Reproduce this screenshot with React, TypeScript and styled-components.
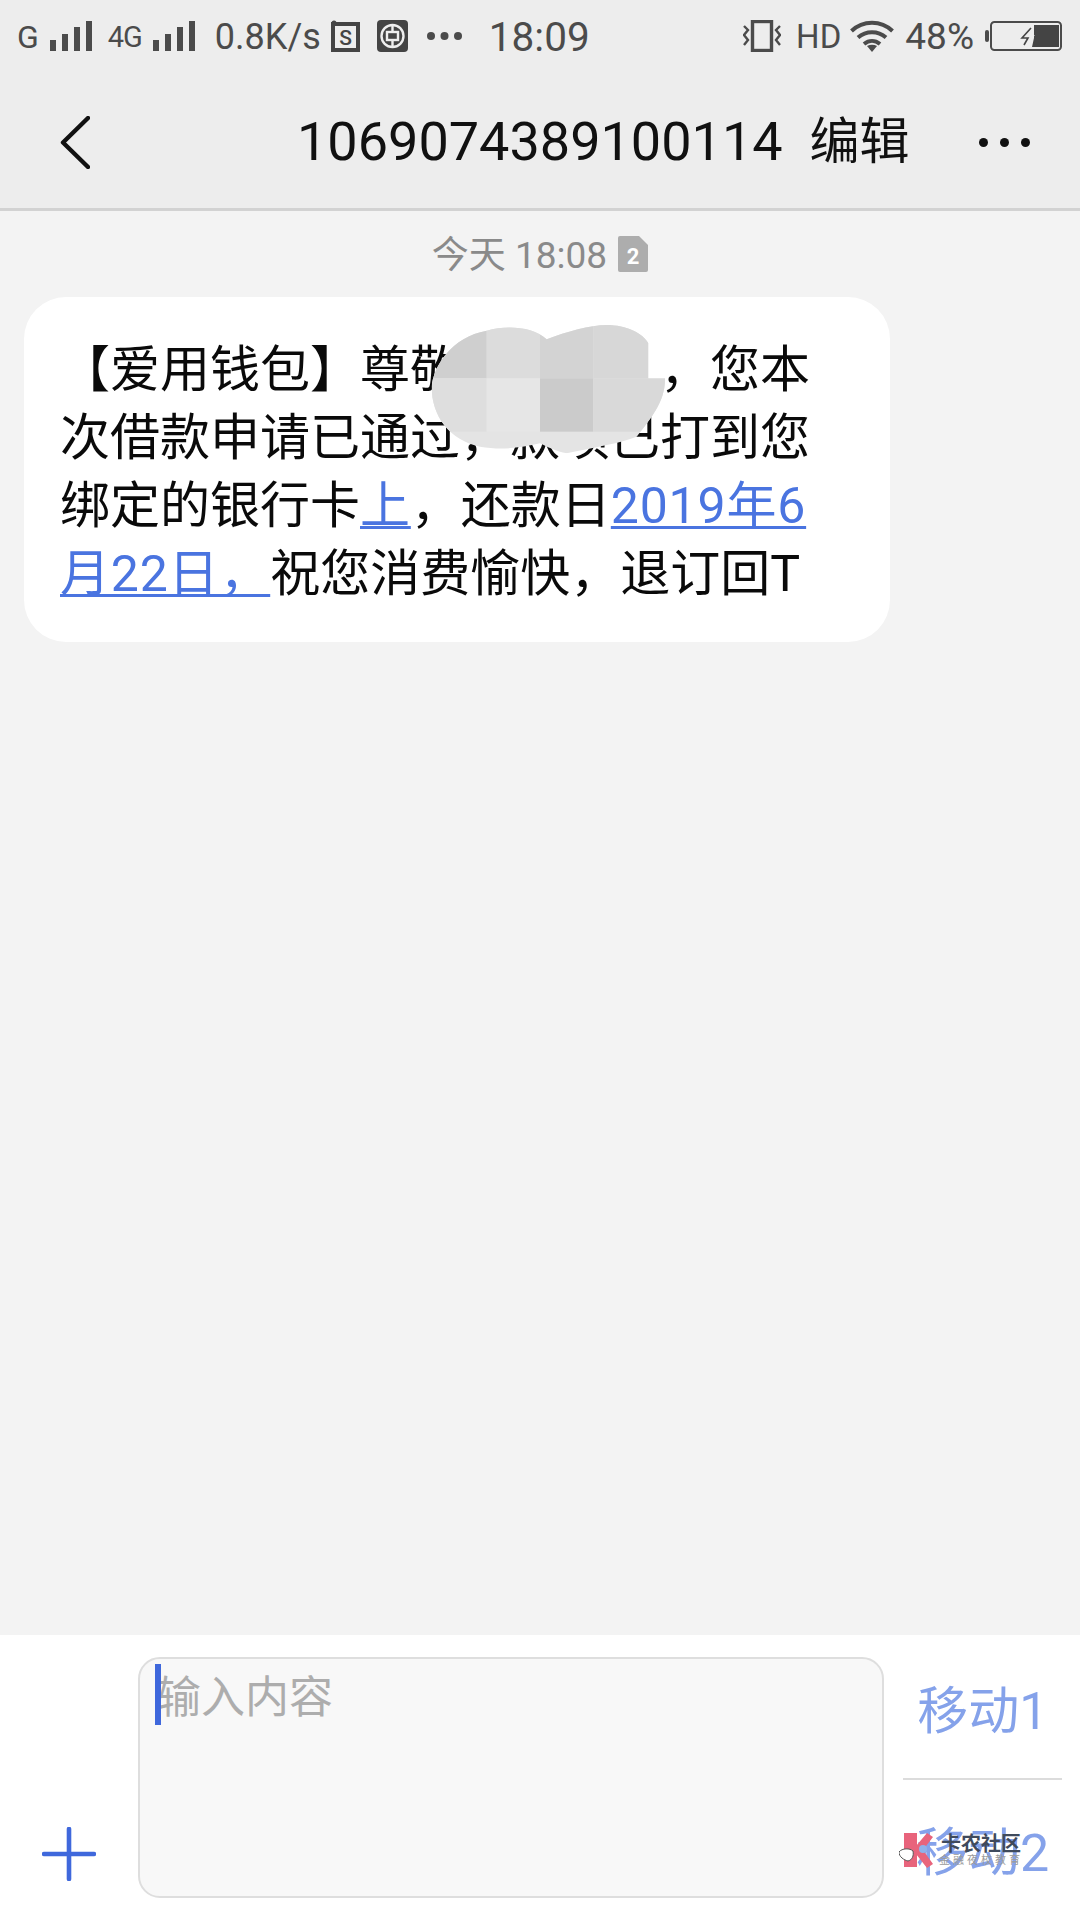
import React from "react";
import styled, { createGlobalStyle } from "styled-components";

const Global = createGlobalStyle`
  html, body { margin: 0; padding: 0; background: #f3f3f3; }
  * { box-sizing: border-box; }
`;

const FONT = `Roboto, "Noto Sans CJK SC", sans-serif`;

const Page = styled.div`
  width: 1080px;
  height: 1920px;
  display: flex;
  flex-direction: column;
  overflow: hidden;
  background: #f3f3f3;
  font-family: ${FONT};
`;

const StatusBar = styled.div`
  height: 72px;
  flex: none;
  display: flex;
  align-items: center;
  padding: 0 18px 0 0;
  background: #ededed;
  color: #4b4b4b;
`;

const Slot = styled.span<{ $left: number }>`
  display: flex;
  align-items: center;
  flex: none;
  margin-left: ${(p) => p.$left}px;
`;

const Spacer = styled.span`
  flex: 1;
`;

const StatusText = styled.span<{ $size: number; $track?: number }>`
  padding-top: 2px;
  font-size: ${(p) => p.$size}px;
  letter-spacing: ${(p) => p.$track ?? 0}px;
  line-height: 40px;
  white-space: nowrap;
`;

const Header = styled.header`
  height: 139px;
  flex: none;
  display: flex;
  align-items: center;
  padding-top: 4px;
  background: #ededed;
  border-bottom: 3px solid #d2d2d2;
  color: #111;
`;

const Title = styled.span`
  font-size: 54px;
  line-height: 64px;
  white-space: nowrap;
`;

const EditLabel = styled.span`
  font-size: 50px;
  line-height: 64px;
  white-space: nowrap;
`;

const Thread = styled.main`
  flex: 1;
  display: flex;
  flex-direction: column;
  background: #f3f3f3;
`;

const TimeRow = styled.div`
  height: 36px;
  margin-top: 25px;
  display: flex;
  justify-content: center;
  align-items: center;
  gap: 11px;
  color: #8a8a8a;
`;

const TimeText = styled.span`
  padding-top: 3px;
  font-size: 37px;
  line-height: 36px;
  white-space: nowrap;
`;

const Bubble = styled.div`
  position: relative;
  width: 866px;
  height: 345px;
  margin: 25px 0 0 24px;
  padding: 39px 0 0 36px;
  background: #fff;
  border-radius: 42px;
  color: #0a0a0a;
`;

const Line = styled.div`
  font-size: 50px;
  line-height: 68px;
  height: 68px;
  white-space: nowrap;
`;

const Link = styled.span`
  color: #4a74e0;
  letter-spacing: 0.8px;
  text-decoration: underline;
  text-decoration-thickness: 3px;
  text-underline-offset: 3px;
`;

const Redaction = styled.svg`
  position: absolute;
  left: 396px;
  top: 13px;
`;

const Composer = styled.footer`
  height: 285px;
  flex: none;
  display: flex;
  background: #fff;
`;

const PlusCell = styled.div`
  width: 138px;
  flex: none;
  display: flex;
  align-items: flex-end;
  padding: 0 0 39px 42px;
`;

const InputBox = styled.div`
  position: relative;
  width: 746px;
  height: 241px;
  margin-top: 22px;
  flex: none;
  padding: 9px 0 0 17px;
  background: #f8f8f8;
  border: 2px solid #dedede;
  border-radius: 22px;
`;

const Placeholder = styled.span`
  font-size: 44px;
  line-height: 60px;
  color: #adadad;
`;

const Caret = styled.span`
  position: absolute;
  left: 15px;
  top: 5px;
  width: 6px;
  height: 61px;
  background: #3f68dc;
`;

const Actions = styled.div`
  flex: 1;
  display: flex;
  flex-direction: column;
  padding: 0 18px 0 19px;
`;

const SimButton = styled.div<{ $height: number; $size: number }>`
  position: relative;
  height: ${(p) => p.$height}px;
  display: flex;
  justify-content: center;
  align-items: center;
  font-size: ${(p) => p.$size}px;
  color: #85a2ea;
  white-space: nowrap;
`;

const Divider = styled.div`
  height: 2px;
  flex: none;
  background: #dcdcdc;
`;

const Watermark = styled.div`
  position: absolute;
  left: -4px;
  top: 52px;
  display: flex;
  align-items: center;
  gap: 4px;
`;

const WatermarkText = styled.div`
  display: flex;
  flex-direction: column;
  align-items: center;
`;

const WatermarkName = styled.span`
  font-size: 20px;
  line-height: 20px;
  font-weight: 700;
  color: #3f4a5c;
`;

const WatermarkSub = styled.span`
  font-size: 11px;
  line-height: 13px;
  letter-spacing: 3px;
  color: #9a9a9a;
`;

const Signal = () => (
  <svg width="42" height="30" viewBox="0 0 42 30" fill="#4b4b4b">
    <rect x="0" y="19" width="6" height="11" />
    <rect x="12" y="13" width="6" height="17" />
    <rect x="24" y="6" width="6" height="24" />
    <rect x="36" y="0" width="6" height="30" />
  </svg>
);

const SimIcon = () => (
  <svg width="29" height="32" viewBox="0 0 29 32">
    <circle cx="3" cy="3" r="2.5" fill="#444" />
    <rect x="2" y="4" width="25" height="26" fill="none" stroke="#444" strokeWidth="4" />
    <text x="14.500" y="24.500" textAnchor="middle" fontSize="21" fontWeight="500" fontFamily="Roboto, sans-serif" fill="#444">S</text>
  </svg>
);

const BankIcon = () => (
  <svg width="31" height="32" viewBox="0 0 31 32">
    <rect width="31" height="32" rx="4" fill="#444" />
    <circle cx="15.500" cy="16" r="11" fill="none" stroke="#eee" strokeWidth="2.400" />
    <rect x="10" y="12" width="11" height="8" fill="none" stroke="#eee" strokeWidth="2.400" />
    <path d="M15.500 5v7M15.500 20v7" stroke="#eee" strokeWidth="2.400" />
  </svg>
);

const Dots = ({ width, r, color }: { width: number; r: number; color: string }) => (
  <svg width={width} height={r * 2 + 2} viewBox={`0 0 ${width} ${r * 2 + 2}`} fill={color}>
    <circle cx={r} cy={r + 1} r={r} />
    <circle cx={width / 2} cy={r + 1} r={r} />
    <circle cx={width - r} cy={r + 1} r={r} />
  </svg>
);

const VibrateIcon = () => (
  <svg width="38" height="32" viewBox="0 0 38 32" fill="none" stroke="#4b4b4b">
    <rect x="9.500" y="1.500" width="19" height="29" strokeWidth="3.400" />
    <path d="M1 6l4 4-4 5 4 5-4 5M37 6l-4 4 4 5-4 5 4 5" strokeWidth="2.400" />
  </svg>
);

const WifiIcon = () => (
  <svg width="44" height="32" viewBox="0 0 44 32" fill="none" stroke="#4b4b4b" strokeWidth="4">
    <path d="M1.500 11C13 0 31 0 42.500 11" />
    <path d="M8 17.500c8-7 20-7 28 0" />
    <path d="M14 24c5-4 11-4 16 0" />
    <path d="M17 26l5 6 5-6c-3-1.600-7-1.600-10 0z" fill="#4b4b4b" stroke="none" />
  </svg>
);

const BatteryIcon = () => (
  <svg width="77" height="30" viewBox="0 0 77 30">
    <rect x="0" y="9" width="4" height="12" rx="2" fill="#4b4b4b" />
    <rect x="6" y="1" width="70" height="28" rx="3.500" fill="none" stroke="#4b4b4b" strokeWidth="2" />
    <path d="M49 4h25v22H47l2-9z" fill="#444" />
    <path d="M48 4l-14 14h7l-5 9 14-13h-7z" fill="#ededed" />
    <path d="M46 7l-9 10h6l-4 7" fill="none" stroke="#444" strokeWidth="1.600" />
  </svg>
);

const BackIcon = () => (
  <svg width="30" height="53" viewBox="0 0 30 53" fill="none" stroke="#111" strokeWidth="4.400" strokeLinecap="round" strokeLinejoin="round">
    <path d="M28 2L3 26.500 28 51" />
  </svg>
);

const SimBadge = () => (
  <svg width="30" height="36" viewBox="0 0 30 36">
    <path d="M2 0h19l9 9v25a2 2 0 0 1-2 2H2a2 2 0 0 1-2-2V2a2 2 0 0 1 2-2z" fill="#adadad" />
    <text x="15" y="28" textAnchor="middle" fontSize="22" fontWeight="700" fontFamily="Roboto, sans-serif" fill="#fff">2</text>
  </svg>
);

const PlusIcon = () => (
  <svg width="54" height="54" viewBox="0 0 54 54" stroke="#3f68dc" strokeWidth="4.600" strokeLinecap="round">
    <path d="M27 2v50M2 27h50" />
  </svg>
);

const BLOB =
  "M35 230C40 170 95 80 200 62C260 45 340 50 380 88C440 65 510 45 560 45C620 45 670 70 685 100V205H735C735 260 715 300 650 380C600 400 530 410 440 430C410 425 380 410 360 400C300 415 240 420 180 410C90 390 35 320 35 230Z";

const tiles = [
  { x: 0, y: 0, w: 200, h: 205, c: "#cfcfcf" },
  { x: 200, y: 0, w: 160, h: 205, c: "#dcdcdc" },
  { x: 360, y: 0, w: 160, h: 205, c: "#d3d3d3" },
  { x: 520, y: 0, w: 165, h: 205, c: "#d7d7d7" },
  { x: 0, y: 205, w: 200, h: 160, c: "#dedede" },
  { x: 200, y: 205, w: 160, h: 160, c: "#e6e6e6" },
  { x: 360, y: 205, w: 160, h: 160, c: "#cbcbcb" },
  { x: 520, y: 205, w: 220, h: 160, c: "#d9d9d9" },
];

const RedactionBlob = () => (
  <Redaction width="260" height="160" viewBox="0 0 780 480">
    <defs>
      <clipPath id="blot">
        <path d={BLOB} />
      </clipPath>
    </defs>
    <g clipPath="url(#blot)">
      <rect width="780" height="480" fill="#e4e4e4" />
      {tiles.map((t) => (
        <rect key={`${t.x}-${t.y}`} x={t.x} y={t.y} width={t.w} height={t.h} fill={t.c} />
      ))}
    </g>
  </Redaction>
);

const WatermarkLogo = () => (
  <svg width="36" height="36" viewBox="0 0 36 36">
    <rect x="5" y="1" width="13" height="34" fill="#e8647c" />
    <path d="M17 14L28 1l6 4-10 13 10 14-6 4L17 22z" fill="#e8647c" />
    <path d="M0 20c3-4 11-4 14-1 1 5-1 9-5 10-4-1-9-4-9-9z" fill="#fff" stroke="#555" strokeWidth="1" />
    <circle cx="24" cy="17" r="4" fill="#8fb2ea" />
  </svg>
);

export default function App() {
  return (
    <Page>
      <Global />
      <StatusBar>
        <Slot $left={17}><StatusText $size={32}>G</StatusText></Slot>
        <Slot $left={11}><Signal /></Slot>
        <Slot $left={16}><StatusText $size={29} $track={-1}>4G</StatusText></Slot>
        <Slot $left={11}><Signal /></Slot>
        <Slot $left={20}><StatusText $size={36}>0.8K/s</StatusText></Slot>
        <Slot $left={10}><SimIcon /></Slot>
        <Slot $left={17}><BankIcon /></Slot>
        <Slot $left={19}><Dots width={35} r={4} color="#4b4b4b" /></Slot>
        <Slot $left={27}><StatusText $size={40.500}>18:09</StatusText></Slot>
        <Spacer />
        <Slot $left={0}><VibrateIcon /></Slot>
        <Slot $left={15}><StatusText $size={33}>HD</StatusText></Slot>
        <Slot $left={9}><WifiIcon /></Slot>
        <Slot $left={11}><StatusText $size={37}>48%</StatusText></Slot>
        <Slot $left={11}><BatteryIcon /></Slot>
      </StatusBar>

      <Header>
        <Slot $left={60}><BackIcon /></Slot>
        <Slot $left={207}><Title>1069074389100114</Title></Slot>
        <Slot $left={27}><EditLabel>编辑</EditLabel></Slot>
        <Slot $left={69}><Dots width={51} r={4.500} color="#111" /></Slot>
      </Header>

      <Thread>
        <TimeRow>
          <TimeText>今天 18:08</TimeText>
          <SimBadge />
        </TimeRow>
        <Bubble>
          <Line>【爱用钱包】尊敬的用户　，您本</Line>
          <Line>次借款申请已通过，款项已打到您</Line>
          <Line>绑定的银行卡<Link>上</Link>，还款日<Link>2019年6</Link></Line>
          <Line><Link>月22日，</Link>祝您消费愉快，退订回T</Line>
          <RedactionBlob />
        </Bubble>
      </Thread>

      <Composer>
        <PlusCell><PlusIcon /></PlusCell>
        <InputBox>
          <Placeholder>输入内容</Placeholder>
          <Caret />
        </InputBox>
        <Actions>
          <SimButton $height={143} $size={51}>移动1</SimButton>
          <Divider />
          <SimButton $height={136} $size={52}>
            移动2
            <Watermark>
              <WatermarkLogo />
              <WatermarkText>
                <WatermarkName>卡农社区</WatermarkName>
                <WatermarkSub>金融夜校教育</WatermarkSub>
              </WatermarkText>
            </Watermark>
          </SimButton>
        </Actions>
      </Composer>
    </Page>
  );
}
